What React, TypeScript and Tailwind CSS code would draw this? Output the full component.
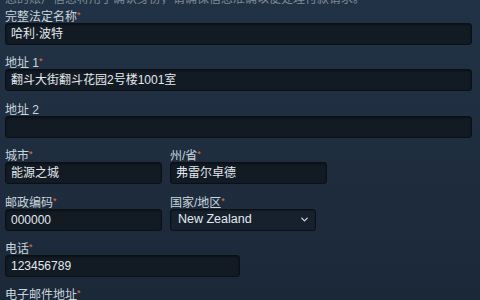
import { ChevronDown } from 'lucide-react';

const font = { fontFamily: '"Liberation Sans", "Noto Sans CJK SC", sans-serif' };

function Label({ text, required }: { text: string; required?: boolean }) {
  return (
    <div className="h-[14px] pt-[1px] text-[12px] leading-[14px] text-[#c9d5de]">
      {text}
      {required && <span className="relative -top-[3px] text-[9px] text-[#e0743c]">*</span>}
    </div>
  );
}

function Field({
  label,
  value,
  required,
  width,
}: {
  label: string;
  value?: string;
  required?: boolean;
  width: string;
}) {
  return (
    <div className={`mb-[10.4px] ${width}`}>
      <Label text={label} required={required} />
      <div className="flex h-[22px] items-center rounded-[3px] border border-[#0b1016] bg-[#121a24] px-[5px] text-[12px] text-[#e3e9ee] shadow-[inset_0_1px_2px_rgba(0,0,0,0.4)]">
        {value}
      </div>
    </div>
  );
}

export default function App() {
  return (
    <div
      style={font}
      className="h-[300px] w-[480px] overflow-hidden bg-gradient-to-b from-[#223246] to-[#1b2838] px-[5px]"
    >
      <div className="-mt-[8px] mb-[3px] h-[14px] whitespace-nowrap text-[12px] leading-[14px] text-[#7f8b96]">
        您的账户信息将用于确认身份，请确保信息准确以便处理付款请求。
      </div>
      <Field label="完整法定名称" value="哈利·波特" required width="w-[467px]" />
      <Field label="地址 1" value="翻斗大街翻斗花园2号楼1001室" required width="w-[467px]" />
      <Field label="地址 2" width="w-[467px]" />
      <div className="flex gap-[8px]">
        <Field label="城市" value="能源之城" required width="w-[157px]" />
        <Field label="州/省" value="弗雷尔卓德" required width="w-[157px]" />
      </div>
      <div className="flex gap-[8px]">
        <Field label="邮政编码" value="000000" required width="w-[157px]" />
        <div className="mb-[10.4px] w-[146px]">
          <Label text="国家/地区" required />
          <div className="flex h-[22px] items-center justify-between rounded-[3px] border border-[#0b1016] bg-[#17212e] pl-[7px] pr-[5px] text-[12.5px] text-[#e3e9ee] shadow-[inset_0_1px_2px_rgba(0,0,0,0.35)]">
            <span>New Zealand</span>
            <ChevronDown size={11} strokeWidth={3} className="text-[#c7d3dc]" />
          </div>
        </div>
      </div>
      <Field label="电话" value="123456789" required width="w-[235px]" />
      <Field label="电子邮件地址" required width="w-[467px]" />
    </div>
  );
}
